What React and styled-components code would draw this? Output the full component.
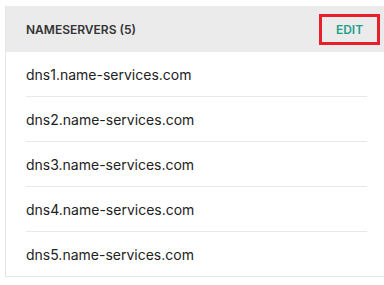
import React from "react";
import styled, { createGlobalStyle } from "styled-components";

const GlobalStyle = createGlobalStyle`
  html, body {
    margin: 0;
    padding: 0;
    background: #fff;
    overflow: hidden;
  }
  body {
    font-family: Inter, "Noto Sans", Arial, sans-serif;
  }
`;

const Page = styled.div`
  padding: 6px 0 0 5px;
`;

const Card = styled.div`
  width: 381px;
  border: 1px solid #e6e6e6;
  background: #fff;
`;

const Header = styled.div`
  display: flex;
  align-items: center;
  justify-content: space-between;
  height: 46px;
  margin-top: -1px;
  padding: 0 7px 0 20px;
  background: #ebebeb;
`;

const Title = styled.h3`
  margin: 0;
  font-size: 12px;
  font-weight: 600;
  color: #333;
  letter-spacing: 0;
`;

const EditButton = styled.button`
  width: 61px;
  height: 31px;
  border: 3px solid #e8202a;
  background: transparent;
  color: #1f9e8a;
  font-family: inherit;
  font-size: 12px;
  font-weight: 600;
  cursor: pointer;
  padding: 0;
`;

const List = styled.ul`
  list-style: none;
  margin: 0;
  padding: 0 20px;
`;

const Item = styled.li`
  height: 45px;
  display: flex;
  align-items: center;
  font-size: 14px;
  color: #222;
  border-bottom: 1px solid ${(p) => (p.last ? "transparent" : "#e8e8e8")};
  box-sizing: border-box;
  &:last-child {
    border-bottom: none;
    height: 44px;
  }
`;

const servers = [
  "dns1.name-services.com",
  "dns2.name-services.com",
  "dns3.name-services.com",
  "dns4.name-services.com",
  "dns5.name-services.com",
];

export default function App() {
  return (
    <Page>
      <GlobalStyle />
      <Card>
        <Header>
          <Title>NAMESERVERS ({servers.length})</Title>
          <EditButton>EDIT</EditButton>
        </Header>
        <List>
          {servers.map((s) => (
            <Item key={s}>{s}</Item>
          ))}
        </List>
      </Card>
    </Page>
  );
}
